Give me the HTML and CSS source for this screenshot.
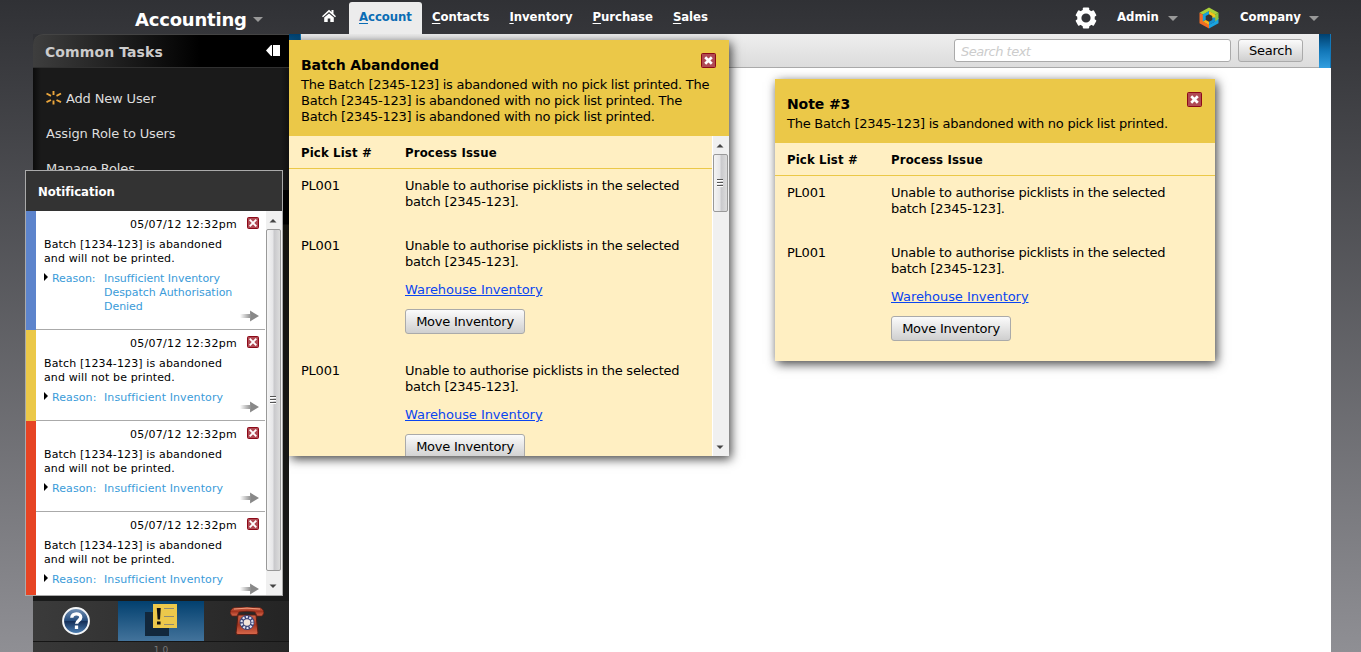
FILE: index.html
```html
<!DOCTYPE html>
<html lang="en">
<head>
<meta charset="utf-8">
<title>Accounting</title>
<link rel="stylesheet" href="styles.css">
</head>
<body>
<svg class="defs" width="0" height="0">
  <defs>
    <linearGradient id="fade"><stop offset="0" stop-color="#888" stop-opacity="0"/><stop offset=".6" stop-color="#888"/></linearGradient>
    <linearGradient id="help" x2="0" y2="1"><stop offset="0" stop-color="#7795b8"/><stop offset=".5" stop-color="#234a7a"/><stop offset=".52" stop-color="#15305a"/><stop offset="1" stop-color="#5084b8"/></linearGradient>
    <linearGradient id="phone" x2="0" y2="1"><stop offset="0" stop-color="#d2674a"/><stop offset=".5" stop-color="#a33520"/><stop offset="1" stop-color="#d9694c"/></linearGradient>
    <symbol id="close" viewBox="0 0 15 15">
      <rect x=".5" y=".5" width="14" height="14" rx="1" fill="#b04a54" stroke="#8c0a18"/>
      <path d="M4.200 4.200l6.600 6.600M10.800 4.200l-6.600 6.600" stroke="#fff" stroke-width="2.700"/>
    </symbol>
    <symbol id="close-small" viewBox="0 0 12 12">
      <rect x=".5" y=".5" width="11" height="11" rx="1" fill="#b04a54" stroke="#8c0a18"/>
      <path d="M2.700 2.700l6.600 6.600M9.300 2.700l-6.600 6.600" stroke="#fff" stroke-width="1.900"/>
    </symbol>
    <symbol id="arrow" viewBox="0 0 19 12">
      <path d="M0 4h10V0.500L19 6l-9 5.500V8H0z" fill="url(#fade)"/>
    </symbol>
    <symbol id="up" viewBox="0 0 8 5"><path d="M.5 4.500L4 1l3.500 3.500z" fill="#444"/></symbol>
    <symbol id="down" viewBox="0 0 8 5"><path d="M.5 .5L4 4 7.500 .5z" fill="#444"/></symbol>
  </defs>
</svg>
<header class="topbar">
  <div class="brand">Accounting<i class="caret"></i></div>
  <nav class="nav">
    <a class="home"><svg width="14" height="14" viewBox="0 0 14 14"><path d="M0 7.200L7 .8l2.500 2.200V1h2v3.800L14 7.200l-1 1L7 3 1 8.200z" fill="#fff"/><path d="M2.200 8.500L7 4.400l4.800 4.100V13H8.300V9.500H5.700V13H2.200z" fill="#fff"/></svg></a>
    <a class="tab active"><u>A</u>ccount</a>
    <a class="tab"><u>C</u>ontacts</a>
    <a class="tab"><u>I</u>nventory</a>
    <a class="tab"><u>P</u>urchase</a>
    <a class="tab"><u>S</u>ales</a>
  </nav>
  <div class="account">
    <svg class="gear" width="22" height="22" viewBox="-11 -11 22 22"><circle r="6.700" fill="none" stroke="#fff" stroke-width="4.200"/><g fill="#fff"><rect x="-3.200" y="-10.500" width="6.400" height="4" rx="1"/><rect x="-3.200" y="-10.500" width="6.400" height="4" rx="1" transform="rotate(60)"/><rect x="-3.200" y="-10.500" width="6.400" height="4" rx="1" transform="rotate(120)"/><rect x="-3.200" y="-10.500" width="6.400" height="4" rx="1" transform="rotate(180)"/><rect x="-3.200" y="-10.500" width="6.400" height="4" rx="1" transform="rotate(240)"/><rect x="-3.200" y="-10.500" width="6.400" height="4" rx="1" transform="rotate(300)"/></g></svg>
    <span class="user">Admin</span><i class="caret"></i>
    <svg class="logo" width="20" height="22" viewBox="-10 -11 20 22">
      <path d="M0-10.500L9.500-5.200 6-3.200 0-6.800-6-3.200-9.500-5.200z" fill="#a9cf3a"/>
      <path d="M-9.500-5.200L-6-3.200V3.400L0 6.800v3.700L-9.500 5.200z" fill="#f36c25"/>
      <path d="M9.500 0v5.200L0 10.500V6.800L6 3.400V1z" fill="#1aa3e0"/>
      <path d="M9.500-5.200V1L6 3.400V-3.200z" fill="#8cc63f"/>
      <path d="M0-7L-6.200-3.500V3.500L-3.300 1.900v-3.800L0-3.800z" fill="#14a0dc"/>
      <path d="M0-7L6.200-3.500V0L3.300 0v-1.900L0-3.800z" fill="#f5c51c"/>
      <path d="M6.200-.5v4L0 7V3.800l3.300-1.900V-.5z" fill="#1792d2"/>
      <path d="M-6.200 3.500L0 7V3.800l-3.300-1.900z" fill="#f9b51a"/>
    </svg>
    <span class="user">Company</span><i class="caret"></i>
  </div>
</header>

<div class="workspace">
  <aside class="sidebar">
    <div class="side-head"><span>Common Tasks</span><svg width="14" height="11" viewBox="0 0 14 11"><path d="M0 5.500L5 0h1v11H5zM7 0h7v11H7z" fill="#fff"/></svg></div>
    <ul class="tasks">
      <li><svg width="16" height="14" viewBox="0 0 16 14"><path d="M7.500 0v4M7.500 9.500v4M.5 2.500l4.500 2.300M.5 11.200L5 9M15 2.500l-4.500 2.300M15 11.200L10.500 9" stroke="#eba63c" stroke-width="1.900"/></svg><span>Add New User</span></li>
      <li>Assign Role to Users</li>
      <li>Manage Roles</li>
    </ul>
    <div class="side-void"></div>
    <div class="dock">
      <div class="dock-item"><svg width="28" height="28" viewBox="0 0 28 28"><circle cx="14" cy="14" r="12.900" fill="url(#help)" stroke="#f4f6f8" stroke-width="2"/><path d="M9.800 10.800C9.600 5.700 18.800 5.500 18.800 10.300c0 3.100-4.200 3.300-4.200 6.500M14.500 18.600v3.400" fill="none" stroke="#fff" stroke-width="3.300"/></svg></div>
      <div class="dock-item on"><svg width="32" height="32" viewBox="0 0 32 32"><path d="M0 8h24v24H0z" fill="#12283c"/><path d="M8 0h24v24H8z" fill="#ecc84b"/><path d="M11.800 4h4l-.8 11.500h-2.400zM12 17.500h3.600V20.500H12z" fill="#111"/><path d="M19 4.500h10M19 12.500h10M19 20.500h10" stroke="#8d8a75"/></svg></div>
      <div class="dock-item"><svg width="34" height="28" viewBox="0 0 34 28"><path d="M8 8L6 26q0 1.500 2 1.500h18q2 0 2-1.500L26 8z" fill="url(#phone)" stroke="#571c12"/><path d="M3 1q14-2 28 0 3 2 3 5l-2 3h-5l-2-4q-8-1.500-16 0L7 9H2L0 6q0-3 3-5z" fill="url(#phone)" stroke="#6a2114" stroke-width=".8"/><path d="M4 2q13-1.700 26 0" fill="none" stroke="#ef9a7c"/><circle cx="17" cy="15.500" r="7.400" fill="#3d4476"/><circle cx="17" cy="15.500" r="5.500" fill="none" stroke="#dfe2f2" stroke-width="2.200" stroke-dasharray="2 1.450"/><circle cx="17" cy="15.500" r="3.300" fill="#f2e3da"/></svg></div>
    </div>
    <div class="version">1.0</div>
  </aside>
  <main class="main">
    <div class="toolbar"><i class="edge"></i><div class="search"><input class="field" type="text" placeholder="Search text"><button class="btn">Search</button></div><i class="edge"></i></div>
  </main>
</div>

<section class="note note-batch">
  <div class="note-head"><h2>Batch Abandoned</h2><p>The Batch [2345-123] is abandoned with no pick list printed. The Batch [2345-123] is abandoned with no pick list printed. The Batch [2345-123] is abandoned with no pick list printed.</p><svg class="note-close" width="15" height="15"><use href="#close"/></svg></div>
  <div class="note-body">
    <div class="note-rows">
      <div class="cols heading"><span>Pick List #</span><span>Process Issue</span></div>
      <div class="cols row"><span>PL001</span><div><p>Unable to authorise picklists in the selected batch [2345-123].</p></div></div>
      <div class="cols row"><span>PL001</span><div><p>Unable to authorise picklists in the selected batch [2345-123].</p><a class="link">Warehouse Inventory</a><button class="btn">Move Inventory</button></div></div>
      <div class="cols row"><span>PL001</span><div><p>Unable to authorise picklists in the selected batch [2345-123].</p><a class="link">Warehouse Inventory</a><button class="btn">Move Inventory</button></div></div>
    </div>
    <div class="scroll"><svg width="8" height="5"><use href="#up"/></svg><div class="thumb thumb-short"><i class="grip"></i></div><svg class="down" width="8" height="5"><use href="#down"/></svg></div>
  </div>
</section>

<section class="note note-three">
  <div class="note-head"><h2>Note #3</h2><p>The Batch [2345-123] is abandoned with no pick list printed.</p><svg class="note-close" width="15" height="15"><use href="#close"/></svg></div>
  <div class="note-body">
    <div class="note-rows">
      <div class="cols heading"><span>Pick List #</span><span>Process Issue</span></div>
      <div class="cols row"><span>PL001</span><div><p>Unable to authorise picklists in the selected batch [2345-123].</p></div></div>
      <div class="cols row"><span>PL001</span><div><p>Unable to authorise picklists in the selected batch [2345-123].</p><a class="link">Warehouse Inventory</a><button class="btn">Move Inventory</button></div></div>
    </div>
  </div>
</section>

<section class="alerts">
  <h3>Notification</h3>
  <div class="alerts-body">
    <div class="alerts-list">
      <article class="alert blue">
        <div class="when">05/07/12 12:32pm<svg width="12" height="12"><use href="#close-small"/></svg></div>
        <p>Batch [1234-123] is abandoned<br>and will not be printed.</p>
        <div class="why"><i class="tri"></i><span>Reason:</span><span>Insufficient Inventory<br>Despatch Authorisation<br>Denied</span></div>
        <svg class="go" width="19" height="12"><use href="#arrow"/></svg>
      </article>
      <article class="alert yellow">
        <div class="when">05/07/12 12:32pm<svg width="12" height="12"><use href="#close-small"/></svg></div>
        <p>Batch [1234-123] is abandoned<br>and will not be printed.</p>
        <div class="why"><i class="tri"></i><span>Reason:</span><span>Insufficient Inventory</span></div>
        <svg class="go" width="19" height="12"><use href="#arrow"/></svg>
      </article>
      <article class="alert red">
        <div class="when">05/07/12 12:32pm<svg width="12" height="12"><use href="#close-small"/></svg></div>
        <p>Batch [1234-123] is abandoned<br>and will not be printed.</p>
        <div class="why"><i class="tri"></i><span>Reason:</span><span>Insufficient Inventory</span></div>
        <svg class="go" width="19" height="12"><use href="#arrow"/></svg>
      </article>
      <article class="alert red">
        <div class="when">05/07/12 12:32pm<svg width="12" height="12"><use href="#close-small"/></svg></div>
        <p>Batch [1234-123] is abandoned<br>and will not be printed.</p>
        <div class="why"><i class="tri"></i><span>Reason:</span><span>Insufficient Inventory</span></div>
        <svg class="go" width="19" height="12"><use href="#arrow"/></svg>
      </article>
    </div>
    <div class="scroll"><svg width="8" height="5"><use href="#up"/></svg><div class="thumb thumb-long"><i class="grip"></i></div><svg class="down" width="8" height="5"><use href="#down"/></svg></div>
  </div>
</section>
</body>
</html>
```
FILE: styles.css
```css
* { box-sizing: border-box; }
body, h2, h3, p, ul { margin: 0; padding: 0; }
svg { display: block; flex: none; }
.defs { position: absolute; }

body {
  position: relative;
  display: flex;
  flex-direction: column;
  height: 652px;
  overflow: hidden;
  background: linear-gradient(#303135, #8f8f94);
  color: #000;
  font: 13px/16px "DejaVu Sans", Verdana, sans-serif;
  letter-spacing: -0.24px;
}

/* top bar */
.topbar {
  display: flex;
  flex: none;
  height: 34px;
  padding-left: 135px;
  color: #fff;
  font-weight: bold;
  font-family: "DejaVu Sans Condensed", "DejaVu Sans", sans-serif;
  letter-spacing: 0;
}
.brand {
  display: flex;
  align-items: center;
  width: 187px;
  padding: 7px 0 2px;
  font: bold 18px/24px "DejaVu Sans", sans-serif;
  letter-spacing: -0.2px;
}
.caret {
  flex: none;
  border: 5px solid transparent;
  border-top-color: #999;
  border-bottom: 0;
}
.brand .caret { margin: 0 0 1px 6px; }
.nav { display: flex; width: 753px; }
.home { width: 27px; padding-top: 9px; }
.tab { height: 32px; margin-top: 2px; padding: 7px 10px 0; letter-spacing: -0.05px; }
.tab u { text-underline-offset: 2px; }
.active { background: #ececec; color: #0a6cb4; border-radius: 3px 3px 0 0; }
.account { display: flex; align-items: flex-start; }
.gear { margin-top: 7px; }
.user { margin: 9px 10px 0 20px; }
.account .caret { margin-top: 16px; }
.account .user + .caret { margin-left: -1px; }
.logo { margin: 7px 0 0 21px; }
.logo + .user { margin-right: 9px; margin-left: 21px; }

/* work area */
.workspace { display: flex; flex: 1; margin: 0 30px 0 33px; background: #fff; min-height: 0; }
.sidebar {
  display: flex;
  flex-direction: column;
  width: 256px;
  background: linear-gradient(90deg, #303135 10px, #000 11px);
}
.side-head {
  display: flex;
  flex: none;
  align-items: flex-start;
  justify-content: space-between;
  height: 34px;
  padding: 9px 9px 0 12px;
  border: solid #444;
  border-width: 1px 0;
  border-bottom-color: #303030;
  border-radius: 10px 0 0 0;
  background: linear-gradient(90deg, #3e3e3e, #000 65%);
  color: #ccc;
  font-weight: bold;
  font-size: 14px;
  letter-spacing: 0.1px;
}
.side-head svg { margin-top: 1px; }
.tasks {
  display: flex;
  flex: none;
  flex-direction: column;
  gap: 19px;
  height: 122px;
  padding: 23px 0 0 13px;
  list-style: none;
  background: linear-gradient(90deg, #0c0c0c, #1a1a1a 8px, #1a1a1a 248px, #111);
  color: #ddd;
  letter-spacing: -0.15px;
  overflow: hidden;
}
.tasks li { display: flex; gap: 4px; }
.side-void { flex: 1; background: linear-gradient(#000, #000 34px, #15140f 35px, #191a1a); }
.dock { display: flex; flex: none; height: 40px; background: linear-gradient(90deg, #3b3b3b, #242424); }
.dock-item { display: flex; align-items: center; justify-content: center; width: 85px; }
.dock-item.on { width: 86px; align-items: flex-start; padding: 3px 0 0 0; background: linear-gradient(#02406f, #43739b); }
.version {
  flex: none;
  height: 11px;
  border-top: 1px solid #151515;
  background: linear-gradient(90deg, #383838, #262626);
  color: #777;
  font-size: 9px;
  line-height: 17px;
  text-align: center;
  letter-spacing: 0;
}

.main { flex: 1; }
.toolbar {
  display: flex;
  justify-content: space-between;
  height: 34px;
  border-bottom: 1px solid #aaa;
  background: linear-gradient(#eee, #dcdcdc);
}
.edge { width: 12px; height: 34px; background: linear-gradient(#00406f, #1277b8 50%, #339fe0); border-right: 1px solid #1277b8; }
.search { display: flex; gap: 7px; margin-left: auto; padding: 5px 16px 0 0; }
.field {
  width: 277px;
  height: 23px;
  padding: 1px 6px 0;
  border: 1px solid #aaa;
  border-radius: 3px;
  background: #fff;
  font: inherit;
  letter-spacing: -0.5px;
}
.field::placeholder { color: #ccc; font-style: italic; opacity: 1; }
.btn {
  display: block;
  height: 25px;
  padding: 0 10px;
  border: 1px solid #aaa;
  border-radius: 3px;
  background: linear-gradient(#fbfbfb, #cfcfcf);
  color: #000;
  font: inherit;
  letter-spacing: inherit;
  white-space: nowrap;
}
.note .btn { width: 120px; }
.search .btn { width: 65px; height: 23px; }

/* floating notes */
.note {
  position: absolute;
  display: flex;
  flex-direction: column;
  width: 440px;
  background: #ffefc2;
  box-shadow: 2px 3px 10px rgba(0, 0, 0, .75);
}
.note-batch { left: 289px; top: 40px; height: 416px; clip-path: inset(-6px -20px -20px 0); }
.note-three { left: 775px; top: 79px; height: 282px; }
.note-head { position: relative; flex: none; padding: 16px 12px 11px; background: #ebc848; }
.note-head h2 { margin-bottom: 3px; font-size: 14px; line-height: 18px; letter-spacing: -0.1px; }
.note-close { position: absolute; top: 13px; right: 13px; }
.note-body { display: flex; flex: 1; min-height: 0; }
.note-rows { flex: 1; overflow: hidden; }
.cols { display: grid; grid-template-columns: 104px 288px; padding: 9px 12px 0; }
.heading {
  height: 33px;
  border-bottom: 1px solid #ebc848;
  font-family: "DejaVu Sans Condensed", "DejaVu Sans", sans-serif;
  font-weight: bold;
  letter-spacing: 0.15px;
}
.row { padding-bottom: 19px; }
.row .btn { margin-bottom: 1px; }
.link { display: block; margin: 12px 0 11px; color: #0a45f0; text-decoration: underline; letter-spacing: -0.05px; }

.scroll {
  display: flex;
  flex: none;
  flex-direction: column;
  align-items: flex-start;
  width: 17px;
  padding: 7px 0 6px;
  border-left: 1px solid #fff;
  background: #f0f0f0;
}
.scroll > svg { margin-left: 3px; }
.thumb {
  display: flex;
  align-items: center;
  justify-content: center;
  width: 15px;
  margin-top: 6px;
  border: 1px solid #999;
  border-radius: 2px;
  background: linear-gradient(90deg, #f4f4f4, #e6e6e8 45%, #c9c9cc 55%, #dcdcdc);
}
.thumb-short { height: 58px; }
.thumb-long { height: 342px; }
.grip { width: 6px; height: 8px; margin-right: 1px; background: repeating-linear-gradient(#555 0 1px, #fff 1px 2px, transparent 2px 3px); }
.scroll > .down { margin-top: auto; }

/* notification panel */
.alerts {
  position: absolute;
  left: 25px;
  top: 170px;
  display: flex;
  flex-direction: column;
  width: 258px;
  height: 426px;
  border: 1px solid #aaa;
  background: #fff;
}
.alerts h3 {
  flex: none;
  height: 40px;
  padding-left: 12px;
  background: #333;
  color: #fff;
  font: bold 13px/41px "DejaVu Sans Condensed", "DejaVu Sans", sans-serif;
  letter-spacing: -0.05px;
}
.alerts-body { display: flex; flex: 1; min-height: 0; }
.alerts-body .scroll { width: 17px; }
.alerts-list { flex: 1; overflow: hidden; font-size: 11px; line-height: 14px; letter-spacing: 0.13px; }
.alert {
  position: relative;
  height: 91px;
  padding: 7px 6px 0 8px;
  border-left: 10px solid #e64424;
  box-shadow: inset 0 -1px #aaa;
}
.blue { height: 119px; border-left-color: #5d84cc; }
.yellow { border-left-color: #ebc848; }
.when { display: flex; justify-content: flex-end; gap: 10px; letter-spacing: 0.3px; }
.when svg { margin-top: -1px; }
.alert p { margin: 6px 0; }
.why { display: grid; grid-template-columns: 8px 52px 1fr; color: #3a9bd9; letter-spacing: 0.1px; white-space: nowrap; }
.blue .why { letter-spacing: -0.04px; }
.tri { width: 0; height: 0; margin-top: 1px; border: 4px solid transparent; border-left-color: #000; border-right: 0; }
.go { position: absolute; right: 6px; bottom: 8px; }
```
